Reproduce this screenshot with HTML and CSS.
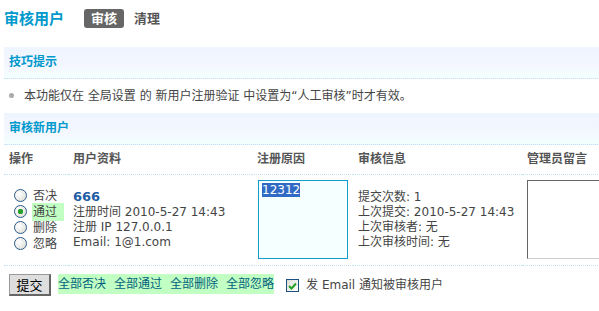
FILE: index.html
```html
<!DOCTYPE html>
<html lang="zh-CN">
<head>
  <meta charset="UTF-8" />
  <title>审核用户</title>
  <link rel="stylesheet" href="styles.css">
</head>
<body>
  <div class="page-head">
    <h1>审核用户</h1>
    <a class="tab on" href="#">审核</a>
    <a class="tab" href="#">清理</a>
  </div>

  <h3 class="section-title">技巧提示</h3>
  <ul class="tips">
    <li>本功能仅在 全局设置 的 新用户注册验证 中设置为“人工审核”时才有效。</li>
  </ul>

  <h3 class="section-title">审核新用户</h3>
  <table class="mod-table">
    <colgroup>
      <col style="width:64px">
      <col style="width:184px">
      <col style="width:101px">
      <col style="width:169px">
      <col style="width:150px">
    </colgroup>
    <thead>
      <tr>
        <th>操作</th>
        <th>用户资料</th>
        <th>注册原因</th>
        <th>审核信息</th>
        <th>管理员留言</th>
      </tr>
    </thead>
    <tbody>
      <tr>
        <td>
          <label class="opt"><input type="radio" name="mod[1]" value="invalidate"><span>否决</span></label>
          <label class="opt"><input type="radio" name="mod[1]" value="validate" checked><span class="hl">通过</span></label>
          <label class="opt"><input type="radio" name="mod[1]" value="delete"><span>删除</span></label>
          <label class="opt"><input type="radio" name="mod[1]" value="ignore"><span>忽略</span></label>
        </td>
        <td class="user-info">
          <a class="uname" href="#">666</a>
          <div>注册时间 2010-5-27 14:43</div>
          <div>注册 IP 127.0.0.1</div>
          <div>Email: 1@1.com</div>
        </td>
        <td><div class="reason-box"><span class="sel">12312</span></div></td>
        <td class="audit-info">
          <div>提交次数: 1</div>
          <div>上次提交: 2010-5-27 14:43</div>
          <div>上次审核者: 无</div>
          <div>上次审核时间: 无</div>
        </td>
        <td><textarea class="remark"></textarea></td>
      </tr>
    </tbody>
  </table>

  <div class="form-actions">
    <button class="btn" type="submit">提交</button>
    <span class="bulk">
      <a href="#">全部否决</a>
      <a href="#">全部通过</a>
      <a href="#">全部删除</a>
      <a href="#">全部忽略</a>
    </span>
    <label class="notify">
      <span class="check">
        <input type="checkbox" checked>
        <svg width="9" height="8" viewBox="0 0 9 8"><path d="M1 4 L3.5 6.5 L8 1.5" fill="none" stroke="#21a121" stroke-width="2"/></svg>
      </span>
      发 Email 通知被审核用户
    </label>
  </div>
</body>
</html>
```

FILE: styles.css
```css
* {
  margin: 0;
  padding: 0;
  box-sizing: border-box;
}
html, body {
  overflow: hidden;
}
body {
  width: 700px;
  background: #fff;
  color: #444;
  font: 12px/16px "DejaVu Sans", "Noto Sans CJK SC", sans-serif;
}
a {
  text-decoration: none;
}
.page-head {
  display: flex;
  align-items: center;
  height: 37px;
  padding-left: 4px;
  margin-bottom: 10px;
}
.page-head h1 {
  font-size: 15px;
  color: #0099cc;
  margin-right: 20px;
}
.tab {
  font-size: 13px;
  font-weight: bold;
  color: #555;
  height: 19px;
  line-height: 19px;
  padding: 0 7px;
  margin-right: 3px;
  border-radius: 3px;
}
.tab.on {
  background: #666;
  color: #fff;
}
.section-title {
  margin-left: 4px;
  height: 32px;
  line-height: 31px;
  padding-left: 5px;
  font-size: 12px;
  color: #0099cc;
  background: linear-gradient(#eef5ff, #f4f6ff 55%, #f3fffe);
  border-bottom: 1px dotted #bfe2f2;
}
.tips {
  list-style: none;
  padding: 8px 0 8px 9px;
  line-height: 18px;
}
.tips li::before {
  content: "";
  display: inline-block;
  width: 5px;
  height: 5px;
  border-radius: 50%;
  background: #aaa;
  margin-right: 10px;
  vertical-align: 2px;
}
.mod-table {
  margin-left: 4px;
  table-layout: fixed;
  border-collapse: collapse;
  width: 668px;
}
.mod-table th {
  height: 29px;
  padding: 0 5px;
  text-align: left;
  font-weight: bold;
  color: #555;
  border-bottom: 1px dotted #bfe2f2;
}
.mod-table td {
  height: 91px;
  padding: 0 5px;
  vertical-align: middle;
  border-bottom: 1px dotted #bfe2f2;
  white-space: nowrap;
}
.opt {
  display: flex;
  align-items: center;
  height: 16px;
  margin-left: 5px;
  white-space: nowrap;
}
.opt input {
  appearance: none;
  flex: none;
  width: 13px;
  height: 13px;
  margin-right: 6px;
  border: 1px solid #2b5d8c;
  border-radius: 50%;
  background: radial-gradient(circle at 35% 35%, #fff, #d9d9d2);
}
.opt input:checked {
  background: radial-gradient(circle, #2aa12a 0 2.5px, transparent 3px),
    radial-gradient(circle at 35% 35%, #fff, #d9d9d2);
}
.hl {
  background: #c2ffc2;
  padding: 1px 7px 1px 1px;
  margin-left: -1px;
}
.user-info,
.audit-info {
  line-height: 15px;
}
.uname {
  display: block;
  font-size: 13px;
  font-weight: bold;
  color: #1f5ea6;
  line-height: 16px;
}
.reason-box {
  width: 90px;
  height: 79px;
  margin-left: 1px;
  padding: 3px 3px;
  border: 1px solid #169bcd;
  background: #f5ffff;
  color: #444;
  line-height: 13px;
}
.sel {
  background: #316ac5;
  color: #fff;
}
.remark {
  display: block;
  width: 110px;
  height: 79px;
  resize: none;
  border: 1px solid #666;
  border-right-color: #ccc;
  border-bottom-color: #ccc;
  background: #fff;
}
.form-actions {
  display: flex;
  align-items: center;
  padding: 8px 0 0 9px;
}
.btn {
  width: 42px;
  height: 22px;
  font: 13px "DejaVu Sans", "Noto Sans CJK SC", sans-serif;
  color: #000;
  background: #dedede;
  border-style: solid;
  border-width: 1px 2px 2px 1px;
  border-color: #999 #666 #666 #999;
  margin-right: 7px;
}
.bulk {
  display: flex;
  gap: 8px;
  height: 20px;
  line-height: 20px;
  margin-top: -2px;
  background: #c2ffc2;
}
.bulk a {
  color: #00617e;
}
.notify {
  display: flex;
  align-items: center;
  margin-left: 12px;
  margin-top: 1px;
}
.check {
  position: relative;
  width: 13px;
  height: 13px;
  margin-right: 7px;
}
.check input {
  appearance: none;
  display: block;
  width: 13px;
  height: 13px;
  border: 1px solid #1c5180;
  background: linear-gradient(135deg, #dcdcd6, #fff);
}
.check svg {
  position: absolute;
  left: 2px;
  top: 3px;
}
```
